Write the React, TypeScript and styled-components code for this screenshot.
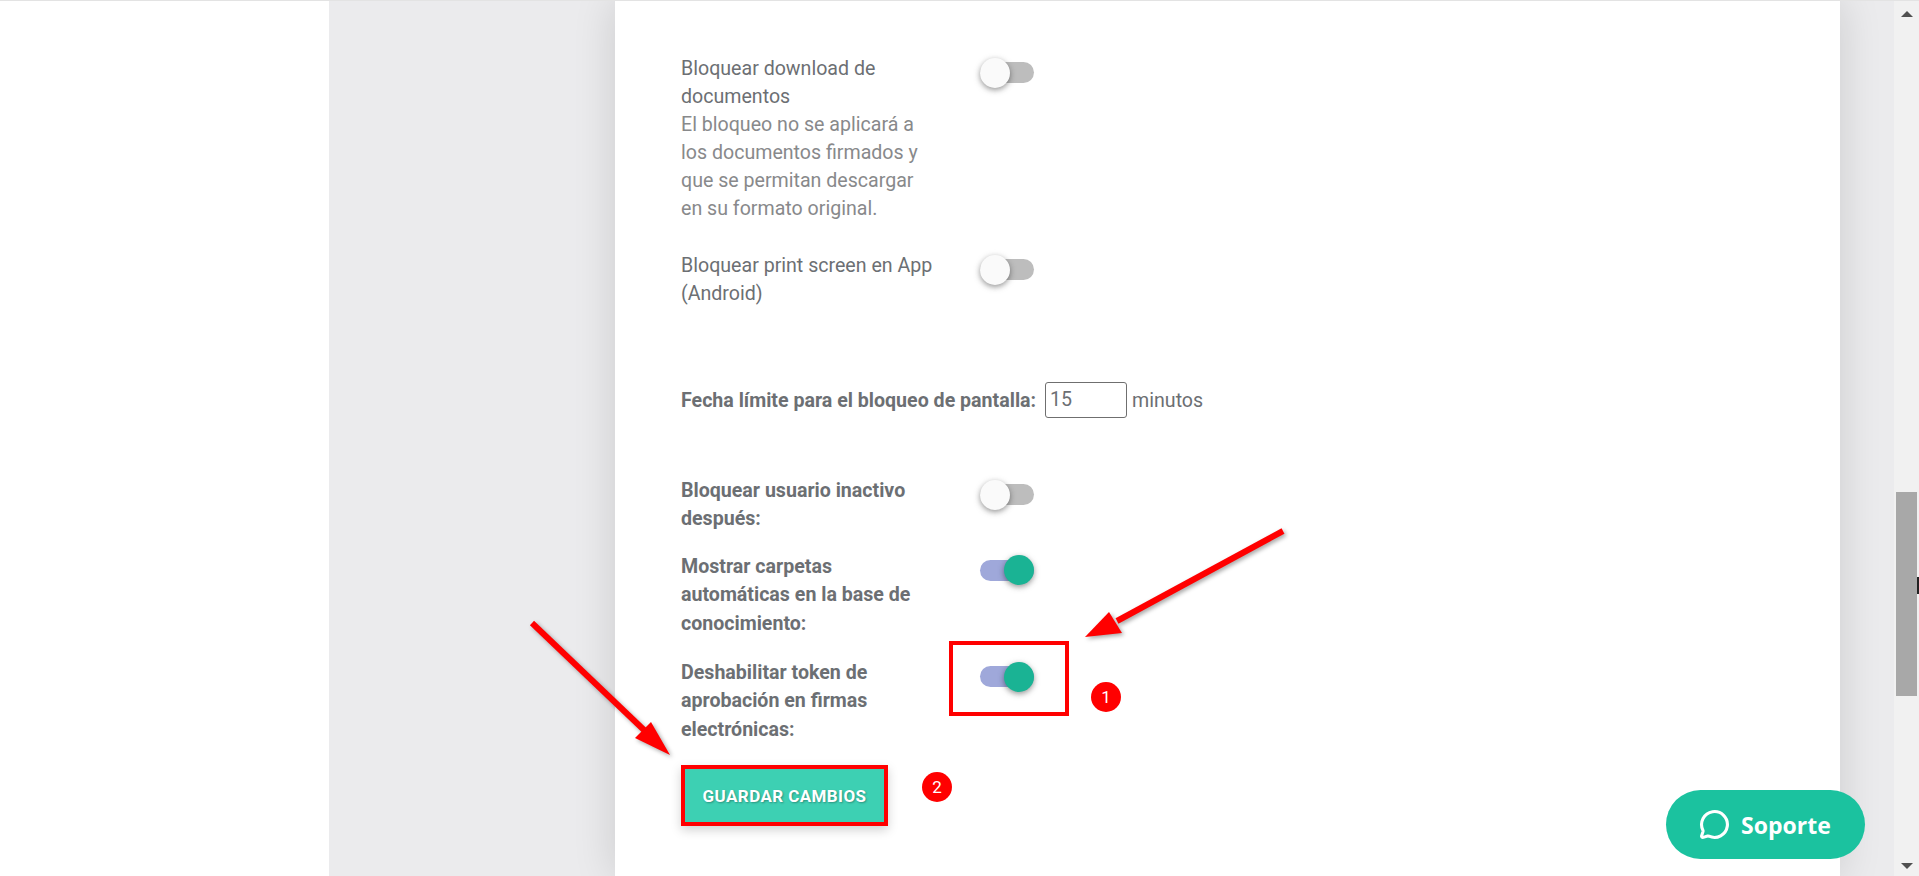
import React from 'react';
import styled, { createGlobalStyle } from 'styled-components';
import { MessageCircle } from 'lucide-react';

const GlobalStyle = createGlobalStyle`
    html, body {
        margin: 0;
        padding: 0;
        height: 100%;
        overflow: hidden;
        background: #fff;
    }
    * {
        box-sizing: border-box;
    }
`;

const Page = styled.div`
    position: relative;
    display: flex;
    width: 1919px;
    height: 876px;
    overflow: hidden;
    font-family: Roboto, 'Liberation Sans', sans-serif;
    font-size: 19.6px;
    color: #6c6f73;
`;
const Blank = styled.div`
    flex: 0 0 329px;
    background: #fff;
    border-top: 1px solid #e3e3e3;
`;
const Gutter = styled.div`
    flex: 1;
    display: flex;
    padding: 0 54px 0 286px;
    background: #ebebed;
    border-top: 1px solid #e3e3e3;
    overflow: hidden;
`;
const Card = styled.main`
    flex: 1;
    padding: 54px 0 0 66px;
    background: #fff;
    box-shadow: 0 0 40px rgba(0, 0, 0, 0.14);
`;
const SettingRow = styled.div<{ $gap?: number }>`
    display: flex;
    align-items: flex-start;
    margin-top: ${(p) => p.$gap ?? 0}px;
`;
const Label = styled.div<{ $bold?: boolean }>`
    flex: 0 0 256px;
    line-height: ${(p) => (p.$bold ? 28.4 : 28)}px;
    font-weight: ${(p) => (p.$bold ? 700 : 400)};
`;
const Hint = styled.span`
    color: #88898b;
`;
const Track = styled.span<{ $on?: boolean; $top?: number }>`
    display: flex;
    align-items: center;
    justify-content: ${(p) => (p.$on ? 'flex-end' : 'flex-start')};
    width: 54px;
    height: 21px;
    margin: ${(p) => p.$top ?? 7}px 0 0 43px;
    border-radius: 11px;
    background: ${(p) => (p.$on ? '#9fa8da' : '#bdbdbd')};
`;
const Thumb = styled.span<{ $on?: boolean }>`
    flex: none;
    width: 30px;
    height: 30px;
    border-radius: 50%;
    background: ${(p) => (p.$on ? '#1ab394' : '#fafafa')};
    box-shadow: 0 2px 5px 0 rgba(0, 0, 0, 0.3), 0 2px 8px 0 rgba(0, 0, 0, 0.14);
`;
const LimitRow = styled.div`
    display: flex;
    align-items: center;
    height: 36px;
    margin-top: 74px;
`;
const LimitLabel = styled.label`
    font-weight: 700;
`;
const LimitInput = styled.input`
    width: 82px;
    height: 36px;
    margin: 0 5px 0 9px;
    padding: 0 4px 2px;
    border: 1px solid #6f6f6f;
    border-radius: 3px;
    background: #fff;
    font-family: inherit;
    font-size: 19.6px;
    color: #6c6f73;
`;
const SaveButton = styled.button`
    display: block;
    width: 207px;
    height: 61px;
    margin-top: 21px;
    padding: 0;
    border: 4px solid #ff0000;
    background: #3dd0b3;
    color: #fff;
    font-family: inherit;
    font-size: 17px;
    font-weight: 700;
    letter-spacing: 0.4px;
    text-transform: uppercase;
    text-shadow: 1px 1px 2px rgba(0, 0, 0, 0.3);
    box-shadow: 0 4px 10px rgba(0, 0, 0, 0.18);
`;
const Scrollbar = styled.div`
    flex: 0 0 25px;
    display: flex;
    flex-direction: column;
    align-items: center;
    background: #f1f1f1;
    border-top: 1px solid #e3e3e3;
`;
const ScrollArrow = styled.span<{ $down?: boolean }>`
    flex: none;
    width: 0;
    height: 0;
    border-left: 6px solid transparent;
    border-right: 6px solid transparent;
    ${(p) =>
        p.$down
            ? 'border-top: 6px solid #505050; margin-top: 167px;'
            : 'border-bottom: 6px solid #505050; margin-top: 10px;'}
`;
const ScrollThumb = styled.div`
    flex: none;
    width: 21px;
    height: 204px;
    margin-top: 475px;
    background: #a8a8a8;
`;
const Cursor = styled.span`
    position: absolute;
    left: 1917px;
    top: 577px;
    width: 2px;
    height: 17px;
    background: #222;
`;
const Highlight = styled.div`
    position: absolute;
    left: 949px;
    top: 641px;
    width: 120px;
    height: 75px;
    border: 4px solid #ff0000;
`;
const Badge = styled.span<{ $left: number; $top: number }>`
    position: absolute;
    left: ${(p) => p.$left}px;
    top: ${(p) => p.$top}px;
    display: flex;
    align-items: center;
    justify-content: center;
    width: 30px;
    height: 30px;
    border-radius: 50%;
    background: #ff0000;
    color: #fff;
    font-size: 17px;
`;
const ArrowSvg = styled.svg<{ $left: number; $top: number }>`
    position: absolute;
    left: ${(p) => p.$left}px;
    top: ${(p) => p.$top}px;
    filter: drop-shadow(2px 2px 2px rgba(0, 0, 0, 0.35));
`;
const SupportButton = styled.button`
    position: absolute;
    left: 1666px;
    top: 790px;
    display: flex;
    align-items: center;
    gap: 11px;
    width: 199px;
    height: 69px;
    padding: 0 0 0 33px;
    border: none;
    border-radius: 35px;
    background: #1bc29f;
    color: #fff;
    font-family: 'Open Sans', sans-serif;
    font-size: 23px;
    font-weight: 700;
`;

type ToggleProps = { on?: boolean; top?: number };

function Toggle({ on, top }: ToggleProps) {
    return (
        <Track $on={on} $top={top}>
            <Thumb $on={on} />
        </Track>
    );
}

export default function App() {
    return (
        <Page>
            <GlobalStyle />
            <Blank />
            <Gutter>
                <Card>
                    <SettingRow>
                        <Label>
                            Bloquear download de documentos
                            <br />
                            <Hint>
                                El bloqueo no se aplicará a los documentos firmados y que se permitan descargar en su
                                formato original.
                            </Hint>
                        </Label>
                        <Toggle />
                    </SettingRow>
                    <SettingRow $gap={29}>
                        <Label>Bloquear print screen en App (Android)</Label>
                        <Toggle />
                    </SettingRow>
                    <LimitRow>
                        <LimitLabel htmlFor="limite">Fecha límite para el bloqueo de pantalla:</LimitLabel>
                        <LimitInput id="limite" defaultValue="15" />
                        minutos
                    </LimitRow>
                    <SettingRow $gap={59}>
                        <Label $bold>Bloquear usuario inactivo después:</Label>
                        <Toggle />
                    </SettingRow>
                    <SettingRow $gap={19}>
                        <Label $bold>Mostrar carpetas automáticas en la base de conocimiento:</Label>
                        <Toggle on />
                    </SettingRow>
                    <SettingRow $gap={21}>
                        <Label $bold>Deshabilitar token de aprobación en firmas electrónicas:</Label>
                        <Toggle on />
                    </SettingRow>
                    <SaveButton>Guardar cambios</SaveButton>
                </Card>
            </Gutter>
            <Scrollbar>
                <ScrollArrow />
                <ScrollThumb />
                <ScrollArrow $down />
            </Scrollbar>
            <Cursor />
            <Highlight />
            <Badge $left={1091} $top={682}>1</Badge>
            <Badge $left={922} $top={772}>2</Badge>
            <ArrowSvg $left={1075} $top={520} width={225} height={130}>
                <line x1={208} y1={11} x2={42} y2={101} stroke="#ff0000" strokeWidth={6} />
                <polygon points="10,117 34,92 47,113" fill="#ff0000" />
            </ArrowSvg>
            <ArrowSvg $left={520} $top={610} width={165} height={160}>
                <line x1={12} y1={13} x2={124} y2={120} stroke="#ff0000" strokeWidth={6} />
                <polygon points="150,145 131,112 115,128" fill="#ff0000" />
            </ArrowSvg>
            <SupportButton>
                <MessageCircle size={31} strokeWidth={2.4} />
                Soporte
            </SupportButton>
        </Page>
    );
}
